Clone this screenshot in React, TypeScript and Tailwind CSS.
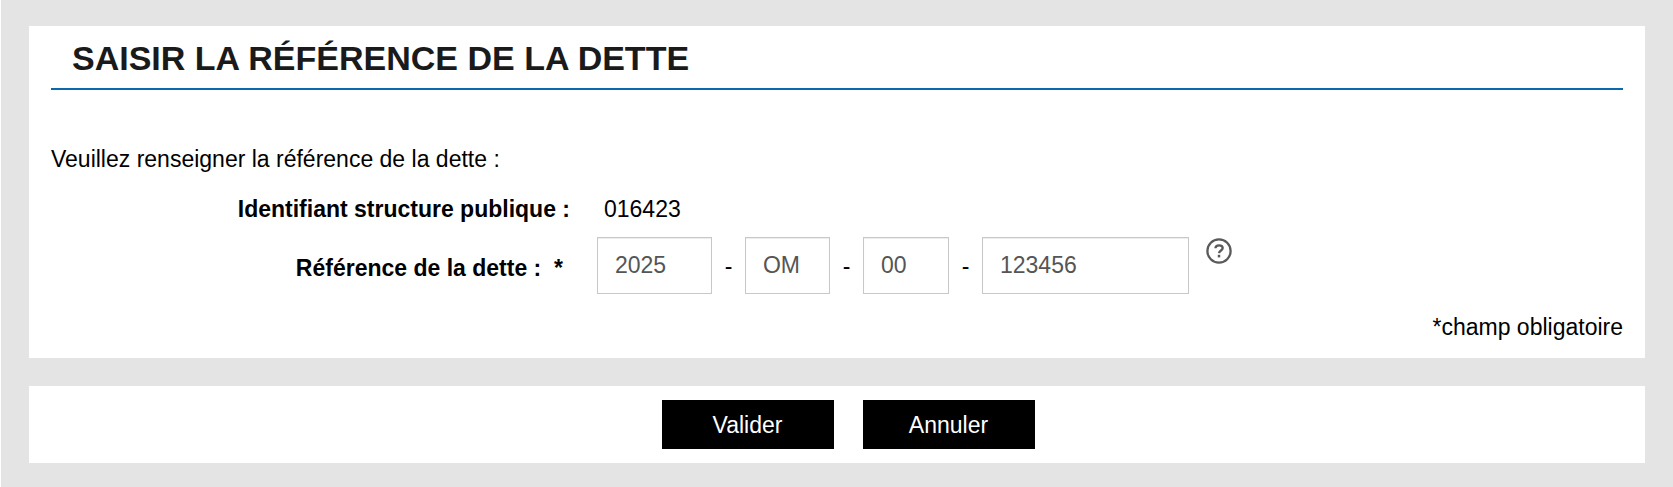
import type { ReactNode } from 'react';

type Segment = { id: string; label: string; value: string; width: string };

const segments: Segment[] = [
  { id: 'exercice', label: 'Exercice', value: '2025', width: 'w-[115px]' },
  { id: 'nature', label: 'Nature', value: 'OM', width: 'w-[85px]' },
  { id: 'periode', label: 'Période', value: '00', width: 'w-[86px]' },
  { id: 'numero', label: 'Numéro', value: '123456', width: 'w-[207px]' },
];

function HelpIcon() {
  return (
    <svg viewBox="0 0 26 26" className="size-[26px]" fill="none" stroke="#5a5a5a" aria-hidden="true">
      <circle cx="13" cy="13" r="11.6" strokeWidth="2.3" />
      <path
        d="M9.4 10.2C9.5 8.3 11 7.3 13.1 7.3C15.3 7.3 16.7 8.4 16.7 10.1C16.7 12.4 13.2 12.5 13 15.2"
        strokeWidth="2.3"
      />
      <path d="M13 16.8V19.4" strokeWidth="2.5" />
    </svg>
  );
}

function ActionButton({ type, children }: { type: 'submit' | 'button'; children: ReactNode }) {
  return (
    <button type={type} className="h-[49px] w-[172px] cursor-pointer bg-black text-white">
      {children}
    </button>
  );
}

export default function App() {
  return (
    <div className="min-h-screen border-l border-white bg-[#e4e4e4] px-7 pt-[26px] pb-5 font-['Liberation_Sans',Arial,sans-serif] text-[23px] leading-7 text-black">
      <form className="flex flex-col gap-7" onSubmit={(e) => e.preventDefault()}>
        <section className="bg-white px-[22px] pt-3 pb-[17px]">
          <h1 className="border-b-2 border-[#0b68ab] px-[21px] pb-[10px] text-[34px] leading-10 font-bold text-[#1a1a1a]">
            SAISIR LA RÉFÉRENCE DE LA DETTE
          </h1>
          <p className="mt-[55px]">Veuillez renseigner la référence de la dette :</p>

          <div className="mt-[22px] flex">
            <div className="w-1/3 pr-[5px] text-right font-bold">Identifiant structure publique :</div>
            <div className="pl-[29px]">016423</div>
          </div>

          <div className="mt-[14px] flex items-center">
            <label htmlFor="exercice" className="w-1/3 pt-1 pr-3 text-right font-bold">
              Référence de la dette :&nbsp; *
            </label>
            <div className="flex items-center pl-[22px]">
              {segments.map((s, i) => (
                <div key={s.id} className="flex items-center">
                  {i > 0 && <span className="w-[33px] text-center">-</span>}
                  <input
                    id={s.id}
                    aria-label={s.label}
                    defaultValue={s.value}
                    className={`${s.width} h-[57px] border border-[#c8c8c8] pl-[17px] text-[#555555] inset-shadow-[0_1px_1px_rgba(0,0,0,0.075)]`}
                  />
                </div>
              ))}
              <button type="button" aria-label="Aide" className="ml-[17px] cursor-pointer self-start pt-px">
                <HelpIcon />
              </button>
            </div>
          </div>

          <p className="mt-[19px] text-right">*champ obligatoire</p>
        </section>

        <div className="flex justify-center gap-[29px] bg-white py-[14px] pl-[22px]">
          <ActionButton type="submit">Valider</ActionButton>
          <ActionButton type="button">Annuler</ActionButton>
        </div>
      </form>
    </div>
  );
}
